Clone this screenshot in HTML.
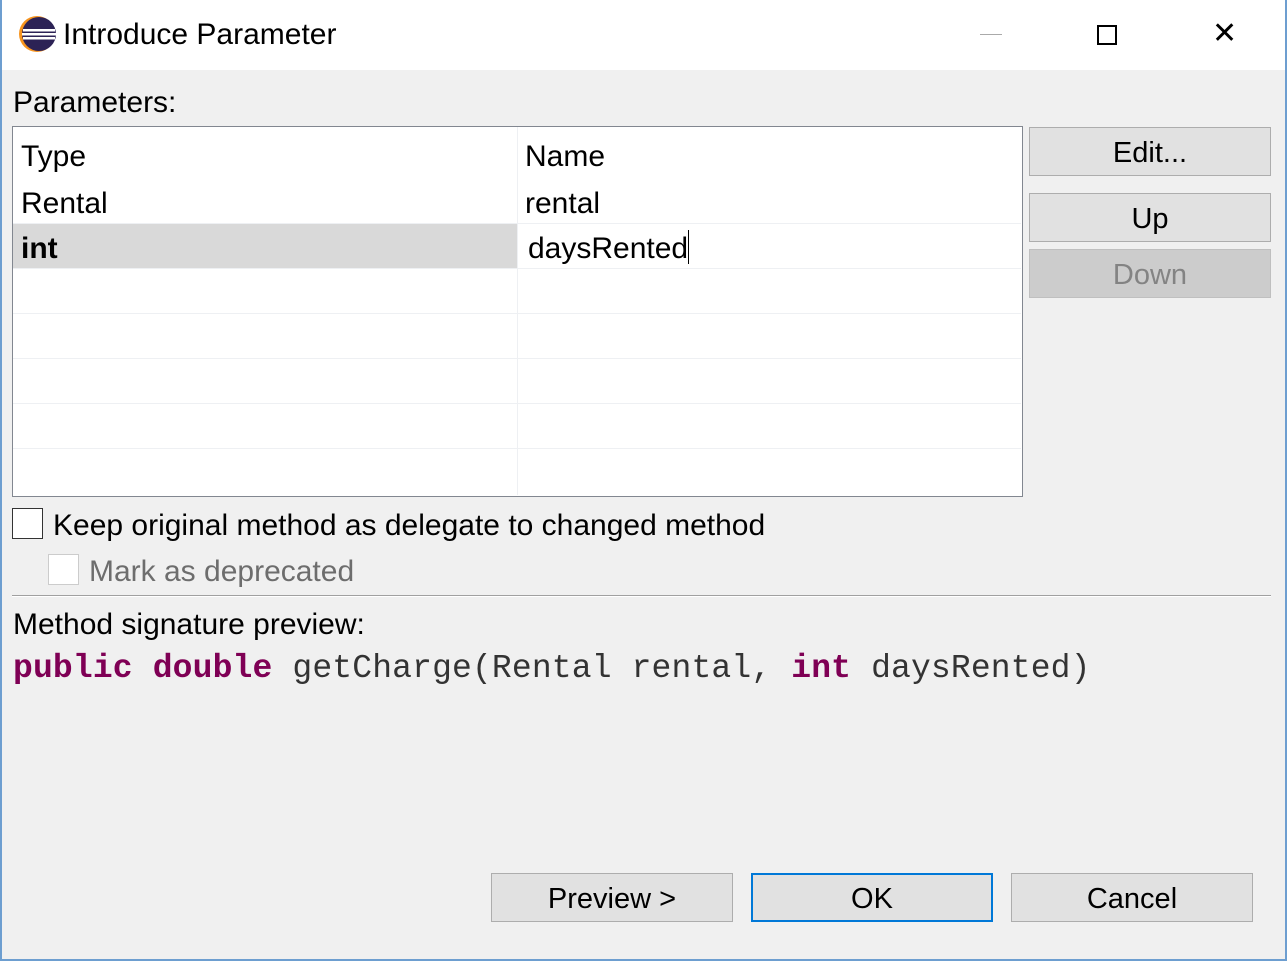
<!DOCTYPE html>
<html><head><style>
body{margin:0;width:1287px;height:961px;background:#f0f0f0;font-family:"Liberation Sans",sans-serif;position:relative;overflow:hidden;color:#000}
.a{position:absolute}
.t{font-size:30px;white-space:nowrap}
.btn{position:absolute;background:#e1e1e1;border:1px solid #adadad;box-sizing:border-box;font-size:29px;text-align:center;line-height:50px}
.row{position:absolute;left:13px;width:1008px;height:1px;background:#eef0f3}
</style></head><body>
<div class="a" style="left:0;top:0;width:1287px;height:70px;background:#fff"></div>
<div class="a" style="left:0;top:0;width:2px;height:961px;background:#6d9ed0"></div>
<div class="a" style="right:0;top:0;width:2px;height:961px;background:#6d9ed0"></div>
<div class="a" style="left:0;bottom:0;width:1287px;height:2px;background:#6d9ed0"></div>
<svg class="a" style="left:17px;top:15px" width="42" height="38" viewBox="0 0 42 38"><circle cx="20" cy="19" r="18" fill="#f7941e"/><circle cx="22" cy="19" r="17" fill="#2c2255"/><rect x="6" y="14" width="32" height="2.5" fill="#fff"/><rect x="5" y="18" width="34" height="2.5" fill="#fff"/><rect x="6" y="22" width="32" height="2.5" fill="#fff"/></svg>
<div class="a t" style="left:63px;top:18px">Introduce Parameter</div>
<div class="a" style="left:980px;top:34px;width:22px;height:1px;background:#aaa"></div>
<div class="a" style="left:1097px;top:25px;width:16px;height:16px;border:2px solid #000"></div>
<div class="a" style="left:1212px;top:22px;font-size:30px;line-height:24px">✕</div>
<div class="a t" style="left:13px;top:86px">Parameters:</div>
<div class="a" style="left:12px;top:126px;width:1009px;height:369px;background:#fff;border:1px solid #828790"></div>
<div class="a" style="left:517px;top:127px;width:1px;height:368px;background:#eef0f3"></div>
<div class="row" style="top:223px"></div><div class="row" style="top:268px"></div><div class="row" style="top:313px"></div><div class="row" style="top:358px"></div><div class="row" style="top:403px"></div><div class="row" style="top:448px"></div>
<div class="a" style="left:13px;top:224px;width:504px;height:44px;background:#d9d9d9"></div>
<div class="a t" style="left:21px;top:140px">Type</div>
<div class="a t" style="left:525px;top:140px">Name</div>
<div class="a t" style="left:21px;top:187px">Rental</div>
<div class="a t" style="left:525px;top:187px">rental</div>
<div class="a t" style="left:21px;top:232px;font-weight:bold">int</div>
<div class="a t" style="left:528px;top:230px">daysRented<span style="display:inline-block;width:1px;height:34px;background:#000;vertical-align:-6px"></span></div>
<div class="btn" style="left:1029px;top:127px;width:242px;height:49px">Edit...</div>
<div class="btn" style="left:1029px;top:193px;width:242px;height:49px">Up</div>
<div class="btn" style="left:1029px;top:249px;width:242px;height:49px;background:#cccccc;border-color:#bfbfbf;color:#838383">Down</div>
<div class="a" style="left:12px;top:508px;width:29px;height:29px;border:1px solid #333;background:#fff"></div>
<div class="a t" style="left:53px;top:509px">Keep original method as delegate to changed method</div>
<div class="a" style="left:48px;top:554px;width:29px;height:29px;border:1px solid #ccc;background:#fff"></div>
<div class="a t" style="left:89px;top:555px;color:#6d6d6d">Mark as deprecated</div>
<div class="a" style="left:12px;top:595px;width:1259px;height:1px;background:#a0a0a0"></div>
<div class="a" style="left:12px;top:596px;width:1259px;height:1px;background:#fff"></div>
<div class="a t" style="left:13px;top:608px">Method signature preview:</div>
<div class="a" style="left:13px;top:650px;font-family:'Liberation Mono',monospace;font-size:33px;letter-spacing:0.15px;white-space:nowrap;color:#333"><b style="color:#7f0055">public</b> <b style="color:#7f0055">double</b> getCharge(Rental rental, <b style="color:#7f0055">int</b> daysRented)</div>
<div class="btn" style="left:491px;top:873px;width:242px;height:49px">Preview &gt;</div>
<div class="btn" style="left:751px;top:873px;width:242px;height:49px;border:2px solid #0078d7;line-height:48px">OK</div>
<div class="btn" style="left:1011px;top:873px;width:242px;height:49px">Cancel</div>
</body></html>
